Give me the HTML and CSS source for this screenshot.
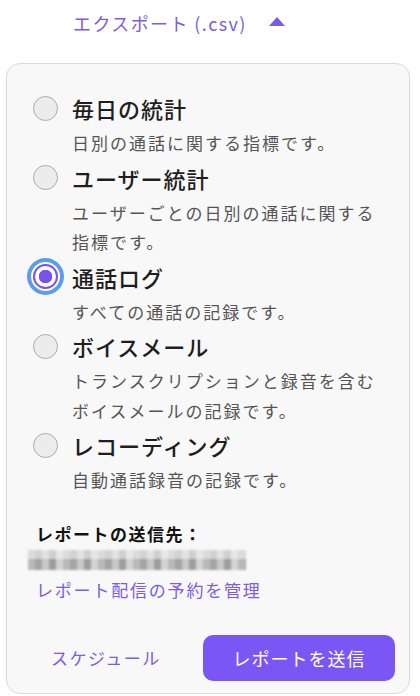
FILE: index.html
```html
<!DOCTYPE html>
<html lang="ja">
<head>
  <meta charset="UTF-8" />
  <meta name="viewport" content="width=device-width, initial-scale=1.0"/>
  <title>エクスポート</title>
  <link rel="stylesheet" href="styles.css">
</head>
<body>
  <!-- トグル -->
  <div class="export-toggle">
    <span>エクスポート (.csv)</span>
    <svg class="caret" width="16" height="9" viewBox="0 0 16 9"><path d="M8 0 L16 9 L0 9 Z" fill="#7b5ce5"/></svg>
  </div>

  <div class="panel">
    <div class="options">
      <label class="option">
        <span class="radio"></span>
        <span class="title">毎日の統計</span>
        <span class="desc">日別の通話に関する指標です。</span>
      </label>
      <label class="option">
        <span class="radio"></span>
        <span class="title">ユーザー統計</span>
        <span class="desc">ユーザーごとの日別の通話に関する<br>指標です。</span>
      </label>
      <label class="option">
        <span class="radio checked"></span>
        <span class="title">通話ログ</span>
        <span class="desc">すべての通話の記録です。</span>
      </label>
      <label class="option">
        <span class="radio"></span>
        <span class="title">ボイスメール</span>
        <span class="desc">トランスクリプションと録音を含む<br>ボイスメールの記録です。</span>
      </label>
      <label class="option">
        <span class="radio"></span>
        <span class="title">レコーディング</span>
        <span class="desc">自動通話録音の記録です。</span>
      </label>
    </div>

    <div class="recipient">
      <div class="recipient-label">レポートの送信先：</div>
      <div class="blurred-email"></div>
      <a class="manage-link" href="#">レポート配信の予約を管理</a>
    </div>

    <div class="actions">
      <button class="btn-text">スケジュール</button>
      <button class="btn-primary">レポートを送信</button>
    </div>
  </div>
</body>
</html>
```

FILE: styles.css
```css
body {
  margin: 0;
  background: #fff;
  font-family: "Noto Sans CJK JP", "Noto Sans", sans-serif;
  color: #222;
}

.export-toggle {
  display: flex;
  align-items: center;
  gap: 22px;
  padding: 8px 0 0 73px;
  height: 29px;
  font-size: 18px;
  letter-spacing: 1.4px;
  color: #7b5ce5;
}

.caret {
  margin-top: -2px;
}

.panel {
  margin: 26px 0 0 6px;
  width: 404px;
  border: 1px solid #dadada;
  border-radius: 14px;
  background: #f8f8f8;
  padding: 24px 0 12px 0;
  box-sizing: border-box;
  height: 631px;
}

.options {
  display: flex;
  flex-direction: column;
  padding-left: 26px;
}

.option {
  display: grid;
  grid-template-columns: 25px 1fr;
  column-gap: 14px;
  align-items: center;
}

.radio {
  width: 25px;
  height: 25px;
  box-sizing: border-box;
  border-radius: 50%;
  border: 1.5px solid #acacac;
  background: #ececec;
}

.radio.checked {
  border: 2px solid #7b52f2;
  background: radial-gradient(circle, #7b52f2 0 6.5px, #fff 7px);
  box-shadow: 0 0 0 2px #fff, 0 0 0 6px #5a9ded;
}

.title {
  font-size: 22px;
  font-weight: 500;
  line-height: 40px;
  letter-spacing: 1px;
  color: #1e1e1e;
}

.desc {
  grid-column: 2;
  font-size: 17px;
  line-height: 29.5px;
  letter-spacing: 2px;
  color: #555;
}

.recipient {
  padding: 26px 0 0 29px;
  display: flex;
  flex-direction: column;
}

.recipient-label {
  font-size: 17px;
  font-weight: bold;
  line-height: 26px;
  letter-spacing: 1.5px;
  color: #111;
}

.blurred-email {
  margin: 3px 0 0 -8px;
  width: 218px;
  height: 20px;
  background:
    linear-gradient(180deg, rgba(248,248,248,0.55) 0 45%, rgba(248,248,248,0) 45%),
    repeating-linear-gradient(90deg, #b9b9b9 0 7px, #a4a4a4 7px 14px, #c8c8c8 14px 21px, #9d9d9d 21px 28px, #d3d3d3 28px 35px);
  filter: blur(1px);
}

.manage-link {
  margin-top: 6px;
  font-size: 17px;
  line-height: 28px;
  letter-spacing: 1.8px;
  color: #7b5ce5;
  text-decoration: none;
}

.actions {
  display: flex;
  align-items: center;
  justify-content: space-between;
  padding: 31px 14px 0 24px;
}

.btn-text {
  border: none;
  background: none;
  font-family: inherit;
  font-size: 17px;
  letter-spacing: 1.5px;
  color: #7b5ce5;
  padding: 0 20px;
}

.btn-primary {
  width: 192px;
  height: 46px;
  border: none;
  border-radius: 10px;
  background: #7c56f4;
  color: #fff;
  font-family: inherit;
  font-size: 18px;
  letter-spacing: 1px;
}
```
